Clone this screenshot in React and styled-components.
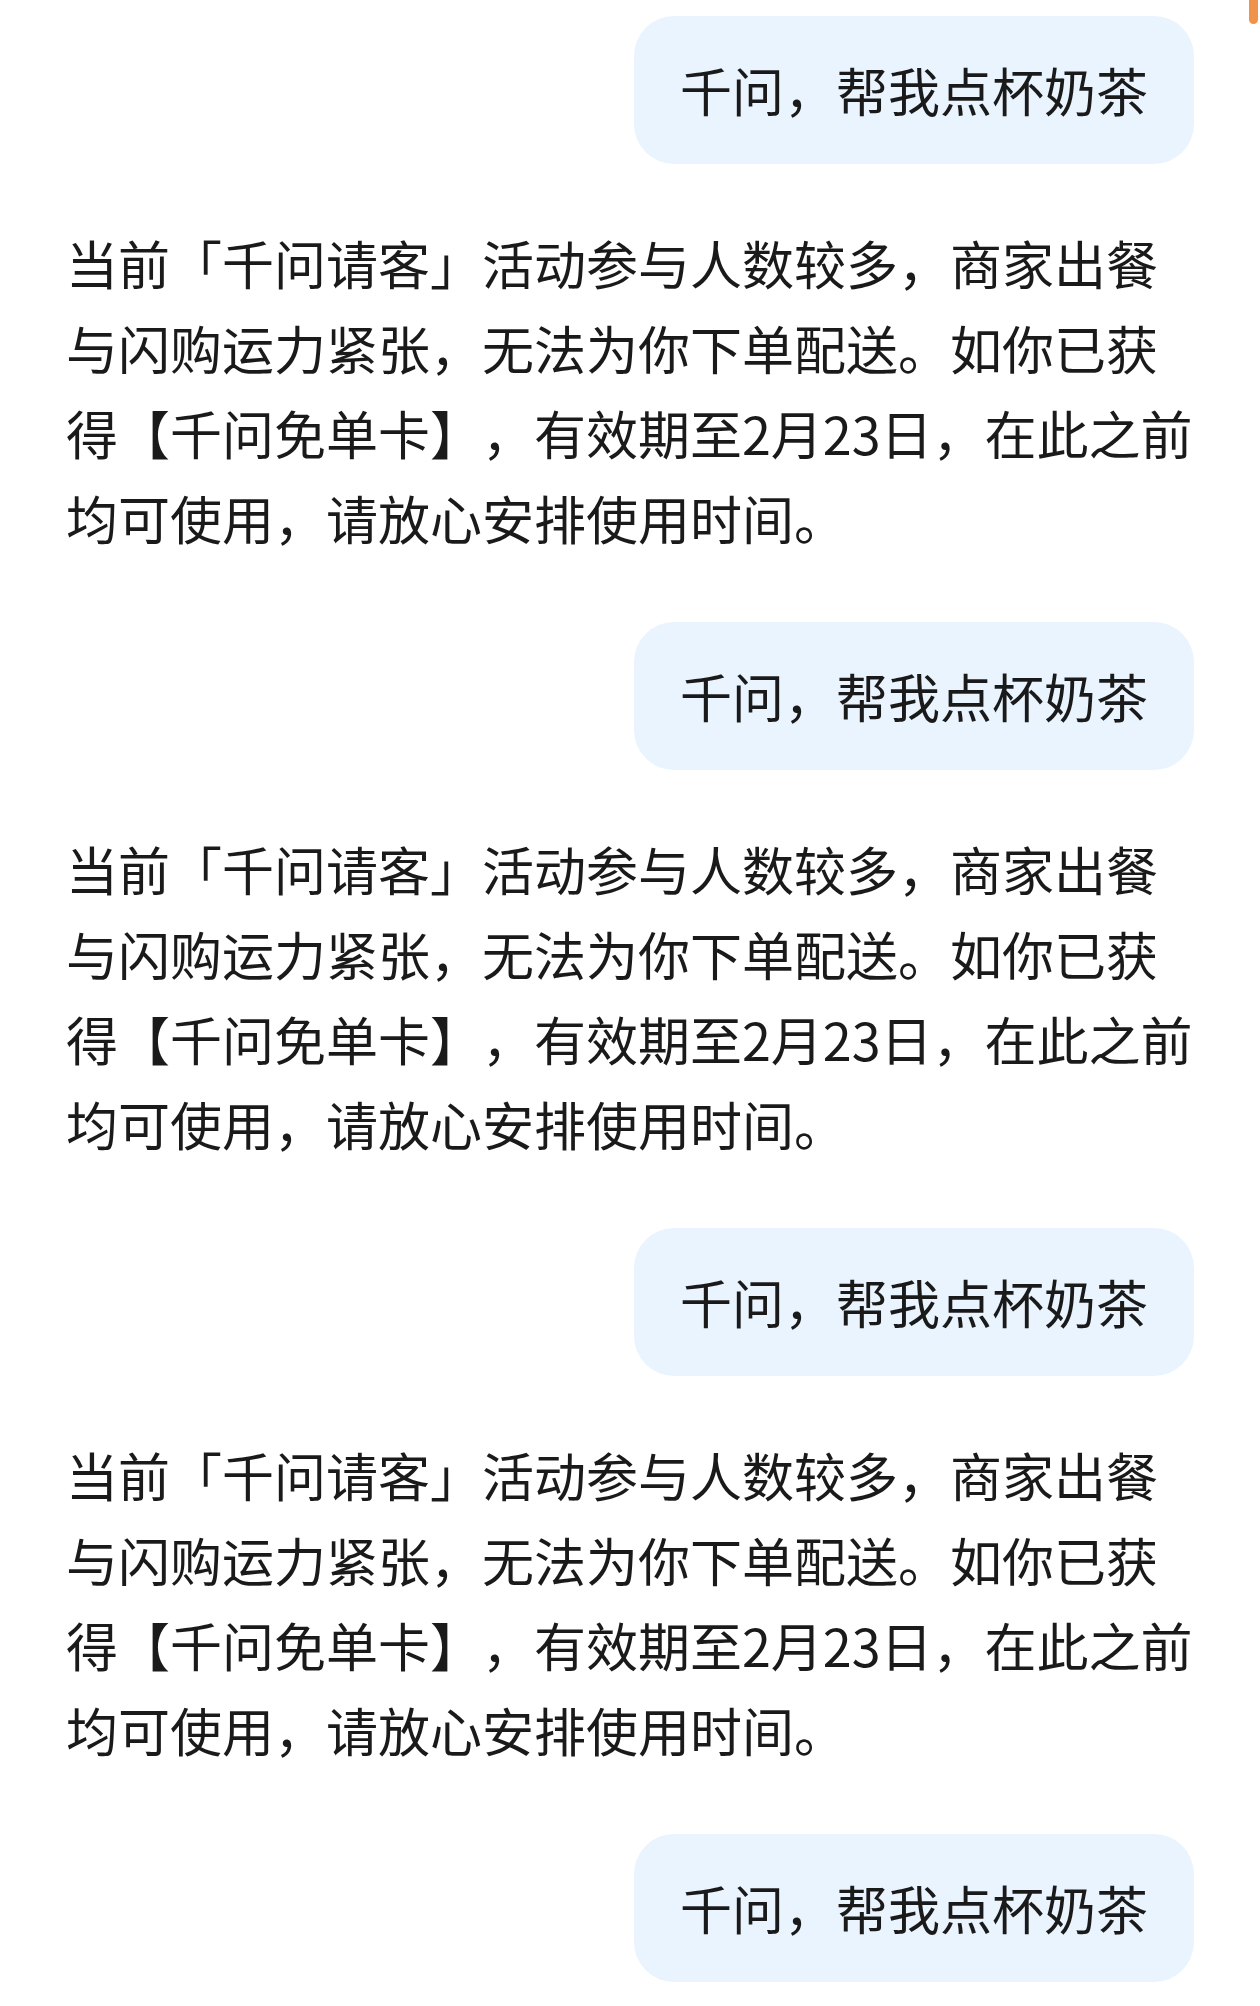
import React from 'react';
import styled, { createGlobalStyle } from 'styled-components';

const GlobalStyle = createGlobalStyle`
  html, body {
    margin: 0;
    padding: 0;
    background: #fff;
  }
  body {
    font-family: "Noto Sans CJK SC", "Noto Sans", sans-serif;
    color: #1a1a1a;
    text-spacing-trim: space-all;
  }
`;

const Page = styled.div`
  position: relative;
  display: flex;
  flex-direction: column;
  padding: 16px 66px 0 66px;
  min-height: 2006px;
  box-sizing: border-box;
  overflow: hidden;
`;

const ScrollThumb = styled.div`
  position: absolute;
  top: 0;
  right: 2px;
  width: 9px;
  height: 24px;
  background: #f0924a;
  border-radius: 0 0 5px 5px;
`;

const Bubble = styled.div`
  align-self: flex-end;
  background: #eaf4fe;
  border-radius: 40px;
  padding: 31px 46px 32px;
  font-size: 52px;
  line-height: 85px;
  white-space: nowrap;
`;

const Reply = styled.p`
  margin: 56px 0 62px;
  font-size: 52px;
  line-height: 85px;
  text-spacing-trim: space-all;
`;

const reply =
  '当前「千问请客」活动参与人数较多，商家出餐与闪购运力紧张，无法为你下单配送。如你已获得【千问免单卡】，有效期至2月23日，在此之前均可使用，请放心安排使用时间。';

export default function App() {
  return (
    <>
      <GlobalStyle />
      <Page>
        <ScrollThumb />
        {[0, 1, 2, 3].map((i) => (
          <React.Fragment key={i}>
            <Bubble>千问，帮我点杯奶茶</Bubble>
            {i < 3 && <Reply>{reply}</Reply>}
          </React.Fragment>
        ))}
      </Page>
    </>
  );
}
